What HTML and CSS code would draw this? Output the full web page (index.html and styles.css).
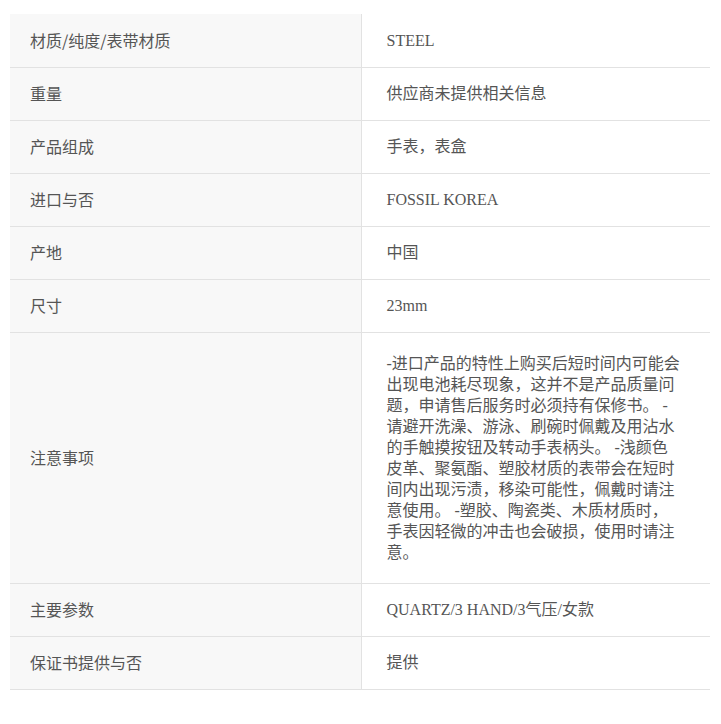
FILE: index.html
```html
<!DOCTYPE html>
<html lang="zh-CN">
<head>
    <meta charset="UTF-8">
    <meta name="viewport" content="width=device-width, initial-scale=1.0">
    <title>商品信息</title>
    <link rel="stylesheet" href="styles.css">
</head>
<body>
    <table class="spec-table">
        <colgroup>
            <col class="spec-label-col">
            <col class="spec-value-col">
        </colgroup>
        <tbody>
            <tr>
                <th>材质/纯度/表带材质</th>
                <td>STEEL</td>
            </tr>
            <tr>
                <th>重量</th>
                <td>供应商未提供相关信息</td>
            </tr>
            <tr>
                <th>产品组成</th>
                <td>手表，表盒</td>
            </tr>
            <tr>
                <th>进口与否</th>
                <td>FOSSIL KOREA</td>
            </tr>
            <tr>
                <th>产地</th>
                <td>中国</td>
            </tr>
            <tr>
                <th>尺寸</th>
                <td>23mm</td>
            </tr>
            <tr class="notes-row">
                <th>注意事项</th>
                <td>-进口产品的特性上购买后短时间内可能会出现电池耗尽现象，这并不是产品质量问题，申请售后服务时必须持有保修书。 -请避开洗澡、游泳、刷碗时佩戴及用沾水的手触摸按钮及转动手表柄头。 -浅颜色皮革、聚氨酯、塑胶材质的表带会在短时间内出现污渍，移染可能性，佩戴时请注意使用。 -塑胶、陶瓷类、木质材质时，手表因轻微的冲击也会破损，使用时请注意。</td>
            </tr>
            <tr>
                <th>主要参数</th>
                <td>QUARTZ/3 HAND/3气压/女款</td>
            </tr>
            <tr>
                <th>保证书提供与否</th>
                <td>提供</td>
            </tr>
        </tbody>
    </table>
</body>
</html>
```

FILE: styles.css
```css
* {
    margin: 0;
    padding: 0;
    box-sizing: border-box;
}

body {
    background-color: #fff;
    padding: 14px 11px 14px 10px;
    font-family: "Liberation Serif", "Noto Sans CJK SC", serif;
    color: #555;
}

.spec-table {
    width: 700px;
    border-collapse: collapse;
    table-layout: fixed;
}

.spec-label-col {
    width: 351px;
}

.spec-table th,
.spec-table td {
    height: 53px;
    font-size: 16px;
    font-weight: normal;
    line-height: 21px;
    text-align: left;
    vertical-align: middle;
    border-bottom: 1px solid #e2e2e2;
}

.spec-table th {
    padding: 0 20px;
    background-color: #f8f8f8;
    border-right: 1px solid #e2e2e2;
    font-family: "Noto Sans CJK SC", "Liberation Sans", sans-serif;
}

.spec-table td {
    padding: 0 28px 0 25px;
    background-color: #fff;
}

.notes-row td {
    padding-top: 20px;
    padding-bottom: 20px;
}
```
